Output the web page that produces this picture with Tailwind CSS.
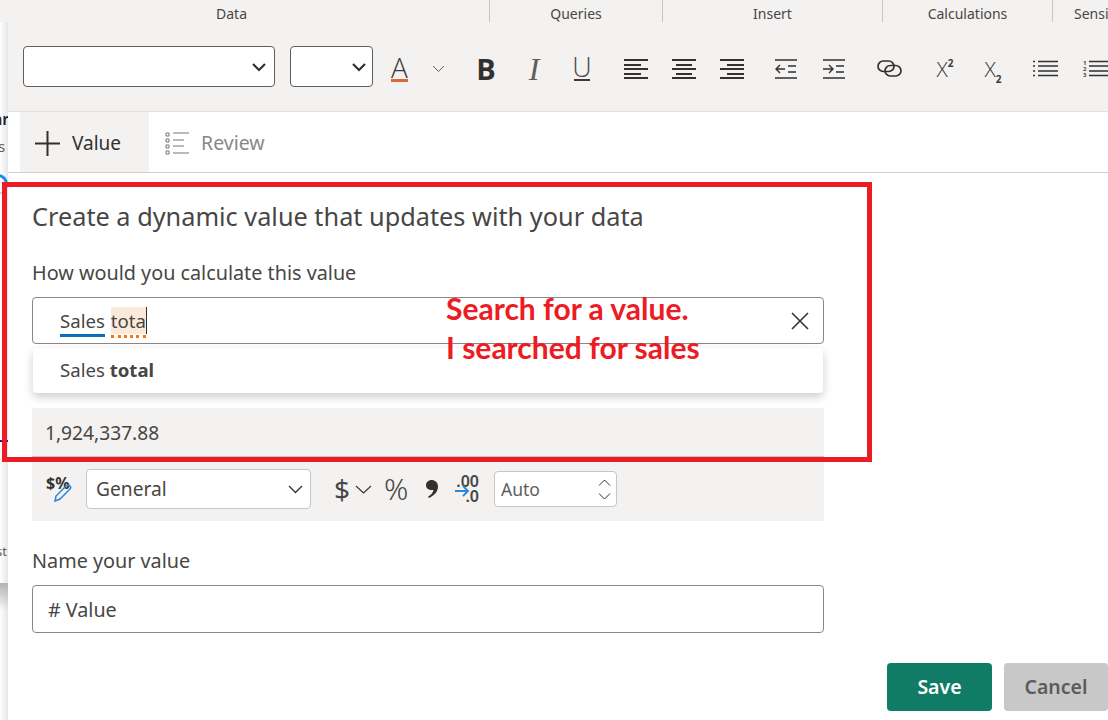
<!DOCTYPE html>
<html lang="en">
<head>
  <meta charset="UTF-8">
  <meta name="viewport" content="width=device-width, initial-scale=1.0">
  <title>Dynamic value</title>
  <script src="https://cdn.jsdelivr.net/npm/@tailwindcss/browser@4"></script>
</head>
<body class="relative w-[1108px] h-[720px] overflow-hidden bg-white font-['Noto_Sans',sans-serif] text-[#484644]">

  <!-- ribbon group labels behind the panel -->
  <div class="flex h-[22px] bg-[#f3f2f1] text-[14px] leading-[28px] text-[#484644] overflow-hidden">
    <div class="w-[490px] shrink-0 text-center pr-[26px] border-r border-[#c8c6c4]">Data</div>
    <div class="w-[173px] shrink-0 text-center border-r border-[#c8c6c4]">Queries</div>
    <div class="w-[220px] shrink-0 text-center border-r border-[#c8c6c4]">Insert</div>
    <div class="w-[170px] shrink-0 text-center border-r border-[#c8c6c4]">Calculations</div>
    <div class="pl-[21px] whitespace-nowrap">Sensitivity</div>
  </div>

  <div class="flex h-[698px]">
    <!-- sliver of the report showing left of the panel -->
    <div class="relative w-[8px] shrink-0 overflow-hidden bg-gradient-to-r from-white to-[#e6e6e6]">
      <span class="absolute left-[-7px] top-[85px] text-[16px] font-semibold text-[#252423]">ar</span>
      <span class="absolute left-[-2px] top-[113px] text-[15px] text-[#605e5c]">s</span>
      <div class="absolute left-[-12px] top-[152px] w-[20px] h-[20px] rounded-full border-t-[3px] border-r-[3px] border-[#1e88e5]"></div>
      <div class="absolute left-0 top-[418px] w-[8px] h-[2px] bg-[#1a237e]"></div>
      <span class="absolute left-[-4px] top-[520px] text-[13px] text-[#605e5c]">st</span>
      <div class="absolute left-0 top-[561px] w-[8px] h-[28px] bg-gradient-to-b from-[#b4b4b4] to-transparent"></div>
    </div>

    <div class="flex-1 min-w-0 flex flex-col overflow-hidden">
      <!-- formatting toolbar -->
      <div class="flex items-center h-[90px] pl-[15px] bg-[#f3f2f1] border-b border-[#e1dfdd] shrink-0">
        <div class="flex items-center justify-end w-[252px] h-[41px] shrink-0 bg-white border border-[#605e5c] rounded pr-[7px]">
          <svg width="16" height="10" viewBox="0 0 16 10" fill="none" stroke="#323130" stroke-width="2.2"><path d="M2 2l6 6 6-6"/></svg>
        </div>
        <div class="flex items-center justify-end w-[83px] h-[41px] ml-[15px] shrink-0 bg-white border border-[#605e5c] rounded pr-[5px]">
          <svg width="16" height="10" viewBox="0 0 16 10" fill="none" stroke="#323130" stroke-width="2.2"><path d="M2 2l6 6 6-6"/></svg>
        </div>
        <div class="flex items-center pt-[4px] shrink-0">
          <div class="flex flex-col items-center w-[17px] ml-[18px] shrink-0">
            <span class="font-['Open_Sans',sans-serif] font-light text-[28px] leading-[23px] text-[#3b3a39]">A</span>
            <div class="w-[17px] h-[3px] bg-[#e0673a]"></div>
          </div>
          <svg class="ml-[24px] shrink-0" width="13" height="8" viewBox="0 0 13 8" fill="none" stroke="#605e5c"><path d="M1 1l5.500 5.500L12 1"/></svg>
          <div class="flex items-center shrink-0 ml-[17px]">
            <div class="w-[48px] text-center font-['Open_Sans',sans-serif] font-bold text-[29px] leading-none text-[#323130]">B</div>
            <div class="w-[48px] text-center font-['Liberation_Serif',serif] italic text-[32px] leading-none text-[#605e5c]">I</div>
            <div class="w-[48px] flex justify-center"><span class="font-['Open_Sans',sans-serif] font-light text-[27px] leading-[21px] w-[16px] flex justify-center border-b-2 border-[#3b3a39] h-[25px]">U</span></div>
          </div>
          <div class="flex items-center shrink-0 ml-[6px]">
            <div class="w-[48px] flex justify-center"><svg width="24" height="20" viewBox="0 0 24 20" fill="#323130"><path d="M0 0h24v2H0zM0 5h17v2H0zM0 9h24v2H0zM0 14h17v2H0zM0 18h24v2H0z"/></svg></div>
            <div class="w-[48px] flex justify-center"><svg width="24" height="20" viewBox="0 0 24 20" fill="#323130"><path d="M0 0h24v2H0zM4 5h16v2H4zM0 9h24v2H0zM4 14h16v2H4zM0 18h24v2H0z"/></svg></div>
            <div class="w-[48px] flex justify-center"><svg width="24" height="20" viewBox="0 0 24 20" fill="#323130"><path d="M0 0h24v2H0zM7 5h17v2H7zM0 9h24v2H0zM7 14h17v2H7zM0 18h24v2H0z"/></svg></div>
          </div>
          <div class="flex items-center shrink-0 ml-[6px]">
            <div class="w-[48px] flex justify-center"><svg width="22" height="20" viewBox="0 0 22 20" fill="none" stroke="#323130" stroke-width="1.400"><path d="M0 1h22M0 19h22M13 7h8M13 13h8M1 10h9M5 6l-4 4 4 4"/></svg></div>
            <div class="w-[48px] flex justify-center"><svg width="22" height="20" viewBox="0 0 22 20" fill="none" stroke="#323130" stroke-width="1.400"><path d="M0 1h22M0 19h22M13 7h8M13 13h8M0 10h9M6 6l4 4-4 4"/></svg></div>
          </div>
          <div class="w-[48px] ml-[7px] flex justify-center shrink-0">
            <svg width="25" height="17" viewBox="0 0 25 17" fill="none" stroke="#323130" stroke-width="1.700"><rect x="1" y="1" width="16" height="10.500" rx="5.250"/><rect x="8" y="5.500" width="16" height="10.500" rx="5.250"/></svg>
          </div>
          <div class="flex items-center shrink-0 ml-[8px]">
            <div class="w-[48px] flex justify-center items-start font-['Open_Sans',sans-serif] text-[#3b3a39]"><span class="font-light text-[21px] leading-[24px]">X</span><span class="font-bold text-[10px] leading-[12px]">2</span></div>
            <div class="w-[48px] flex justify-center items-end font-['Open_Sans',sans-serif] text-[#3b3a39]"><span class="font-light text-[21px] leading-[24px]">X</span><span class="font-bold text-[10px] leading-[10px] relative top-[3px]">2</span></div>
          </div>
          <div class="flex items-center shrink-0 ml-[4px]">
            <div class="w-[48px] flex justify-center"><svg width="25" height="17" viewBox="0 0 25 17" fill="none" stroke="#323130" stroke-width="1.600"><path d="M0 1.500h2M5 1.500h20M0 6h2M5 6h20M0 11h2M5 11h20M0 15.500h2M5 15.500h20"/></svg></div>
            <div class="w-[48px] flex pl-[14px]">
              <div class="flex flex-col font-bold text-[6px] leading-[6px] w-[6px]"><span>1</span><span>2</span><span>3</span></div>
              <svg width="25" height="17" viewBox="0 0 25 17" fill="none" stroke="#323130" stroke-width="1.600"><path d="M0 1.500h25M0 6h25M0 11h25M0 15.500h25"/></svg>
            </div>
          </div>
        </div>
      </div>

      <!-- tabs -->
      <div class="flex h-[61px] pl-[12px] border-b border-[#d2d0ce] shrink-0 text-[19px]">
        <div class="flex items-center w-[129px] bg-[#f3f2f1] pl-[15px] pt-[2px] text-[#323130]">
          <svg width="25" height="25" viewBox="0 0 25 25" stroke="#323130" stroke-width="2"><path d="M12.500 0v25M0 12.500h25"/></svg>
          <span class="ml-[12px]">Value</span>
        </div>
        <div class="flex items-center pl-[16px] pt-[2px] text-[#8a8886]">
          <svg width="24" height="23" viewBox="0 0 24 23" fill="none" stroke="#797775"><path d="M1 1h3v3H1zM1 7h3v3H1zM1 13h3v3H1zM1 19h3v3H1zM8 1h16M8 8h11M8 14h11M8 21h16"/></svg>
          <span class="ml-[12px] text-[19.500px]">Review</span>
        </div>
      </div>

      <!-- value form -->
      <div class="w-[792px] ml-[24px] flex flex-col">
        <h2 class="mt-[25px] text-[25.300px] leading-[36px]">Create a dynamic value that updates with your data</h2>
        <label class="mt-[25px] text-[19.800px] leading-[28px]">How would you calculate this value</label>
        <div class="mt-[10px] flex items-center justify-between h-[47px] pl-[27px] pr-[14px] border border-[#8a8886] rounded-sm text-[18.600px]">
          <div class="flex items-center">
            <span class="border-b-[3px] border-[#0f6cbd] leading-[28px] h-[33px] pt-[3px]">Sales</span>
            <span class="relative ml-[6px] bg-[#fbe9d9] leading-[27px] h-[27px] border-r border-[#323130]">tota<span class="absolute left-0 right-0 top-[28px] border-t-[3px] border-dotted border-[#f7760e]"></span></span>
          </div>
          <svg width="18" height="18" viewBox="0 0 18 18" stroke="#323130" stroke-width="1.600"><path d="M1 1l16 16M17 1L1 17"/></svg>
        </div>
        <div class="mt-[4px] mx-[1px] flex items-center h-[45px] pl-[27px] pb-[2px] bg-white rounded-sm shadow-[0_4px_10px_rgba(0,0,0,0.2)] text-[18.600px]">
          <span>Sales <b class="font-bold">total</b></span>
        </div>
        <div class="mt-[15px] flex items-center h-[49px] pl-[13px] pt-[3px] bg-[#f3f2f1] border-b border-[#c8c6c4] text-[19.200px]">1,924,337.88</div>
        <div class="flex items-center h-[64px] bg-[#f3f2f1] pl-[14px]">
          <div class="relative w-[26px] h-[26px] shrink-0">
            <span class="absolute left-0 top-[-5px] font-bold text-[16px] leading-[24px] text-[#323130]">$%</span>
            <svg class="absolute left-[7px] top-[7px]" width="20" height="20" viewBox="0 0 20 20" fill="none" stroke="#2b88d8" stroke-width="1.500"><path d="M2 18l1-5L13 3c1-1 3-1 4 0s1 2 0 3L7 16z"/></svg>
          </div>
          <div class="flex items-center justify-between w-[225px] h-[40px] ml-[14px] pl-[9px] pr-[7px] bg-white border border-[#c8c6c4] rounded-sm text-[19.200px] shrink-0">
            <span>General</span>
            <svg width="15" height="9" viewBox="0 0 15 9" fill="none" stroke="#323130" stroke-width="1.300"><path d="M1 1l6.500 6.500L14 1"/></svg>
          </div>
          <span class="ml-[23px] w-[14px] text-center text-[28px] leading-none shrink-0">$</span>
          <svg class="ml-[7px] shrink-0" width="17" height="9" viewBox="0 0 17 9" fill="none" stroke="#323130" stroke-width="1.100"><path d="M1 1l7.500 7L16 1"/></svg>
          <span class="ml-[12px] w-[23px] text-center font-light text-[30px] leading-none shrink-0">%</span>
          <svg class="ml-[18px] shrink-0" width="13" height="18" viewBox="0 0 13 18" fill="#323130"><path d="M6.500 0C10 0 13 2.500 13 6.500c0 5-3.500 9-9 11.500l-1-1.300c3-1.800 5-4 5.500-6.700C4 10.500 1 8.500 1 5.500 1 2.300 3.500 0 6.500 0z"/></svg>
          <div class="relative ml-[17px] w-[24px] h-[30px] shrink-0 font-semibold text-[16px] leading-[15px] text-right">
            <div>.00</div><div>.0</div>
            <svg class="absolute left-0 top-[11px]" width="15" height="12" viewBox="0 0 15 12" fill="none" stroke="#2b88d8" stroke-width="1.800"><path d="M0 6h13M8 1l5 5-5 5"/></svg>
          </div>
          <div class="flex items-center justify-between w-[123px] h-[36px] ml-[15px] pl-[6px] pr-[5px] bg-white border border-[#c8c6c4] rounded-sm text-[17.500px] text-[#605e5c] shrink-0">
            <span>Auto</span>
            <div class="flex flex-col gap-[7px]">
              <svg width="13" height="7" viewBox="0 0 13 7" fill="none" stroke="#323130"><path d="M1 6.500L6.500 1 12 6.500"/></svg>
              <svg width="13" height="7" viewBox="0 0 13 7" fill="none" stroke="#323130"><path d="M1 .5L6.500 6 12 .5"/></svg>
            </div>
          </div>
        </div>
        <label class="mt-[26px] text-[19.800px] leading-[28px]">Name your value</label>
        <div class="mt-[10px] flex items-center h-[48px] pl-[15px] pt-[2px] border border-[#8a8886] rounded-sm text-[19.700px]"># Value</div>
      </div>

      <div class="flex justify-end gap-[12px] mt-[30px] text-[19.500px]">
        <button class="w-[105px] h-[48px] rounded-sm bg-[#107c66] text-white font-semibold">Save</button>
        <button class="w-[104px] h-[48px] rounded-sm bg-[#c8c8c8] text-[#5c5c5c] font-semibold">Cancel</button>
      </div>
    </div>
  </div>

  <!-- red annotation drawn over the screenshot -->
  <div class="absolute left-[2px] top-[182px] w-[870px] h-[280px] border-[5px] border-[#ed1c24]"></div>
  <div class="absolute left-[446px] top-[289px] font-['Lato',sans-serif] font-bold text-[30px] leading-[39px] text-[#ed1c24]">
    <p>Search for a value.</p>
    <p>I searched for sales</p>
  </div>
</body>
</html>
